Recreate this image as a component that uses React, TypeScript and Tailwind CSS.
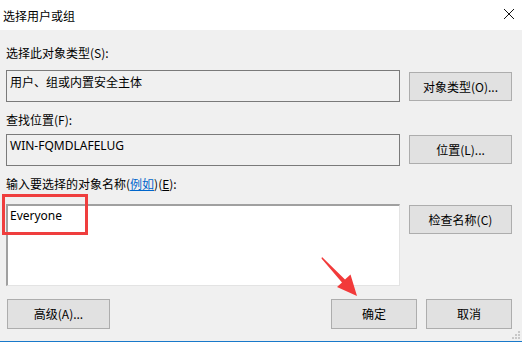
const FONT = { fontFamily: '"Microsoft YaHei UI", "Noto Sans CJK SC", "Noto Sans", sans-serif' }

function Btn({ label, className = '' }: { label: React.ReactNode; className?: string }) {
  return (
    <div
      className={`flex items-center justify-center border border-[#adadad] bg-[#e1e1e1] text-[12px] text-black ${className}`}
    >
      {label}
    </div>
  )
}

export default function App() {
  return (
    <div className="relative h-[342px] w-[522px] overflow-hidden bg-[#f0f0f0] text-[12px] leading-[16px] text-black" style={FONT}>
      {/* Title bar */}
      <div className="flex h-[30px] items-center justify-between bg-white pl-[3px] pr-[7px]">
        <span className="mt-[2px] text-[12px]">选择用户或组</span>
        <svg width="12" height="12" viewBox="0 0 12 12" className="-mt-[3px]">
          <path d="M1 1L11 11M11 1L1 11" stroke="#111" strokeWidth="1" />
        </svg>
      </div>

      <div className="pl-[6px] pr-[10px]">
        <div className="mt-[15px] h-[16px]">选择此对象类型(S):</div>

        <div className="mt-[9px] flex gap-[9px]">
          <div className="h-[32px] w-[394px] border border-[#7a7a7a] px-[3px] pt-[3px]">用户、组或内置安全主体</div>
          <Btn label="对象类型(O)..." className="mt-[2px] h-[29px] w-[103px]" />
        </div>

        <div className="mt-[10px] h-[16px]">查找位置(F):</div>

        <div className="mt-[6px] flex gap-[9px]">
          <div className="h-[32px] w-[394px] border border-[#7a7a7a] px-[3px] pt-[3px]" style={{ fontFamily: '"Segoe UI", "Noto Sans", sans-serif' }}>
            WIN-FQMDLAFELUG
          </div>
          <Btn label="位置(L)..." className="mt-[1px] h-[29px] w-[103px]" />
        </div>

        <div className="mt-[10px] h-[16px]">
          输入要选择的对象名称(<span className="text-[#0066cc] underline">例如</span>)(<span className="underline">E</span>):
        </div>

        <div className="mt-[12px] flex gap-[9px]">
          <div className="h-[82px] w-[394px] border-l-2 border-t-2 border-r border-b border-l-[#a0a0a0] border-t-[#a0a0a0] border-r-[#e3e3e3] border-b-[#e3e3e3] bg-white px-[2px] pt-[2px]" style={{ fontFamily: '"Segoe UI", "Noto Sans", sans-serif' }}>
            Everyone
          </div>
          <Btn label="检查名称(C)" className="mt-[1px] h-[29px] w-[103px]" />
        </div>

        <div className="mt-[13px] flex items-start">
          <Btn label="高级(A)..." className="ml-[1px] h-[30px] w-[103px]" />
          <div className="flex-1" />
          <Btn label="确定" className="h-[30px] w-[86px]" />
          <Btn label="取消" className="ml-[9px] h-[30px] w-[86px]" />
        </div>
      </div>

      {/* resize grip */}
      <svg className="absolute bottom-[2px] right-[1px]" width="10" height="10" viewBox="0 0 10 10">
        <rect x="7" y="1" width="2" height="2" fill="#c8c8c8" />
        <rect x="4" y="4" width="2" height="2" fill="#c8c8c8" />
        <rect x="7" y="4" width="2" height="2" fill="#c8c8c8" />
        <rect x="1" y="7" width="2" height="2" fill="#c8c8c8" />
        <rect x="4" y="7" width="2" height="2" fill="#c8c8c8" />
        <rect x="7" y="7" width="2" height="2" fill="#c8c8c8" />
      </svg>

      {/* bottom accent line */}
      <div className="absolute bottom-0 left-0 h-[1px] w-full bg-[#1979ca]" />

      {/* annotation: red box */}
      <div className="absolute left-[2px] top-[194px] h-[41px] w-[86px] border-[3px] border-[#ef3e3e]" />

      {/* annotation: red arrow */}
      <svg className="absolute left-0 top-0" width="522" height="342" viewBox="0 0 522 342">
        <path d="M322 257 L345 279.5 L350.5 274.5 L357 296 L337 287 L342 282.5 L321.5 258.5 Z" fill="#f23a3a" />
      </svg>
    </div>
  )
}
